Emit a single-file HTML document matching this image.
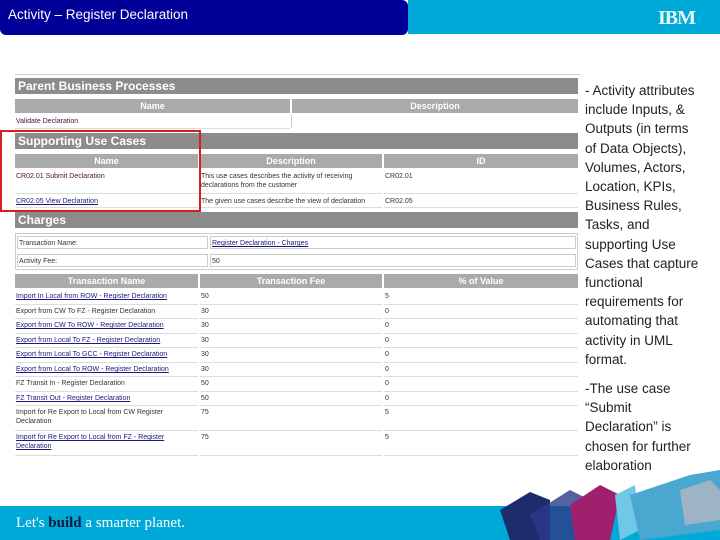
<!DOCTYPE html><html><head><style>
body{margin:0;width:720px;height:540px;position:relative;overflow:hidden;background:#fff;font-family:"Liberation Sans",sans-serif}
.a{position:absolute}
.bar{position:absolute;background:#8c8c8c;color:#fff;font-weight:bold;font-size:12px;line-height:16px;padding-left:3px;box-sizing:border-box}
.hd{position:absolute;background:#aaa;color:#fff;font-weight:bold;font-size:9px;line-height:14px;text-align:center}
.c{position:absolute;font-size:7px;line-height:9px;color:#333;border-bottom:1px solid #ddd;box-sizing:border-box;padding:2px 1px}
.l{color:#1a1a7a;text-decoration:underline}
.p{color:#4a1040}
.t{position:absolute;left:585px;font-size:13.5px;line-height:19.2px;color:#222;white-space:nowrap}
</style></head><body>
<div class="a" style="left:0;top:0;width:408px;height:35px;background:#000099;border-radius:0 6px 6px 6px"></div>
<div class="a" style="left:408px;top:0;width:312px;height:34px;background:#00aad8"></div>
<div class="a" style="left:8px;top:7px;color:#fff;font-size:13.5px">Activity – Register Declaration</div>
<div class="a" style="left:658px;top:7px;color:#e8f6fb;font-size:20px;font-weight:bold;letter-spacing:-1px;font-family:'Liberation Serif',serif">IBM</div>

<div class="a" style="left:15px;top:74px;width:565px;height:1px;background:#ccc"></div>
<div class="bar" style="left:15px;top:78px;width:563px;height:16px">Parent Business Processes</div>
<div class="hd" style="left:15px;top:99px;width:275px">Name</div>
<div class="hd" style="left:292px;top:99px;width:286px">Description</div>
<div class="c p" style="left:15px;top:115px;width:275px;height:14px">Validate Declaration</div>
<div class="a" style="left:291px;top:115px;width:1px;height:13px;background:#ccc"></div>
<div class="bar" style="left:15px;top:133px;width:563px;height:16px">Supporting Use Cases</div>
<div class="hd" style="left:15px;top:154px;width:183px">Name</div>
<div class="hd" style="left:200px;top:154px;width:182px">Description</div>
<div class="hd" style="left:384px;top:154px;width:194px">ID</div>
<div class="c p" style="left:15px;top:170px;width:183px;height:24px">CR02.01 Submit Declaration</div>
<div class="c" style="left:200px;top:170px;width:182px;height:24px">This use cases describes the activity of receiving declarations from the customer</div>
<div class="c" style="left:384px;top:170px;width:194px;height:24px">CR02.01</div>
<div class="c l" style="left:15px;top:195px;width:183px;height:13px">CR02.05 View Declaration</div>
<div class="c" style="left:200px;top:195px;width:182px;height:13px">The given use cases describe the view of declaration</div>
<div class="c" style="left:384px;top:195px;width:194px;height:13px">CR02.05</div>
<div class="a" style="left:0;top:130px;width:197px;height:78px;border:2px solid #d42020"></div>
<div class="bar" style="left:15px;top:212px;width:563px;height:16px">Charges</div>
<div class="a" style="left:15px;top:233px;width:563px;height:37px;border:1px solid #ccc;box-sizing:border-box"></div>
<div class="c" style="left:17px;top:236px;width:191px;height:13px;border:1px solid #ccc">Transaction Name:</div>
<div class="c l" style="left:210px;top:236px;width:366px;height:13px;border:1px solid #ccc">Register Declaration - Charges</div>
<div class="c" style="left:17px;top:254px;width:191px;height:13px;border:1px solid #ccc">Activity Fee:</div>
<div class="c" style="left:210px;top:254px;width:366px;height:13px;border:1px solid #ccc">50</div>
<div class="hd" style="left:15px;top:274px;width:183px">Transaction Name</div>
<div class="hd" style="left:200px;top:274px;width:182px">Transaction Fee</div>
<div class="hd" style="left:384px;top:274px;width:194px">% of Value</div>
<div class="a" style="left:0;top:290px">
<div class="c l" style="left:15px;top:0;width:183px;height:15px">Import In Local from ROW - Register Declaration</div><div class="c" style="left:200px;top:0;width:182px;height:15px">50</div><div class="c" style="left:384px;top:0;width:194px;height:15px">5</div>
<div class="c" style="left:15px;top:15px;width:183px;height:14px">Export from CW To FZ - Register Declaration</div><div class="c" style="left:200px;top:15px;width:182px;height:14px">30</div><div class="c" style="left:384px;top:15px;width:194px;height:14px">0</div>
<div class="c l" style="left:15px;top:29px;width:183px;height:15px">Export from CW To ROW - Register Declaration</div><div class="c" style="left:200px;top:29px;width:182px;height:15px">30</div><div class="c" style="left:384px;top:29px;width:194px;height:15px">0</div>
<div class="c l" style="left:15px;top:44px;width:183px;height:14px">Export from Local To FZ - Register Declaration</div><div class="c" style="left:200px;top:44px;width:182px;height:14px">30</div><div class="c" style="left:384px;top:44px;width:194px;height:14px">0</div>
<div class="c l" style="left:15px;top:58px;width:183px;height:15px">Export from Local To GCC - Register Declaration</div><div class="c" style="left:200px;top:58px;width:182px;height:15px">30</div><div class="c" style="left:384px;top:58px;width:194px;height:15px">0</div>
<div class="c l" style="left:15px;top:73px;width:183px;height:14px">Export from Local To ROW - Register Declaration</div><div class="c" style="left:200px;top:73px;width:182px;height:14px">30</div><div class="c" style="left:384px;top:73px;width:194px;height:14px">0</div>
<div class="c" style="left:15px;top:87px;width:183px;height:15px">FZ Transit In - Register Declaration</div><div class="c" style="left:200px;top:87px;width:182px;height:15px">50</div><div class="c" style="left:384px;top:87px;width:194px;height:15px">0</div>
<div class="c l" style="left:15px;top:102px;width:183px;height:14px">FZ Transit Out - Register Declaration</div><div class="c" style="left:200px;top:102px;width:182px;height:14px">50</div><div class="c" style="left:384px;top:102px;width:194px;height:14px">0</div>
<div class="c" style="left:15px;top:116px;width:183px;height:25px">Import for Re Export to Local from CW Register Declaration</div><div class="c" style="left:200px;top:116px;width:182px;height:25px">75</div><div class="c" style="left:384px;top:116px;width:194px;height:25px">5</div>
<div class="c l" style="left:15px;top:141px;width:183px;height:25px">Import for Re Export to Local from FZ - Register Declaration</div><div class="c" style="left:200px;top:141px;width:182px;height:25px">75</div><div class="c" style="left:384px;top:141px;width:194px;height:25px">5</div>
</div>

<div class="t" style="top:81px">- Activity attributes<br>include Inputs, &amp;<br>Outputs (in terms<br>of Data Objects),<br>Volumes, Actors,<br>Location, KPIs,<br>Business Rules,<br>Tasks, and<br>supporting Use<br>Cases that capture<br>functional<br>requirements for<br>automating that<br>activity in UML<br>format.</div>
<div class="t" style="top:379px">-The use case<br>“Submit<br>Declaration” is<br>chosen for further<br>elaboration</div>

<div class="a" style="left:0;top:506px;width:720px;height:34px;background:#00aad8"></div>
<svg class="a" style="left:490px;top:470px" width="230" height="70">
<polygon points="10,40 40,22 60,30 60,70 20,70" fill="#1d2d6b"/>
<polygon points="40,45 80,20 100,30 90,70 50,70" fill="#2a3a8a" opacity=".8"/>
<polygon points="80,35 110,15 130,25 120,70 85,70" fill="#a0206e"/>
<polygon points="125,25 145,15 150,60 130,70" fill="#6fc8e8"/>
<polygon points="140,25 200,5 230,0 230,60 150,70" fill="#4aa8d0"/>
<polygon points="190,20 220,10 230,20 230,50 195,55" fill="#9cb4c4"/>
</svg>
<div class="a" style="left:16px;top:515px;color:#fff;font-size:15px;font-family:'Liberation Serif',serif">Let's <b style="color:#0a1a3a">build</b> a smarter planet.</div>
</body></html>
